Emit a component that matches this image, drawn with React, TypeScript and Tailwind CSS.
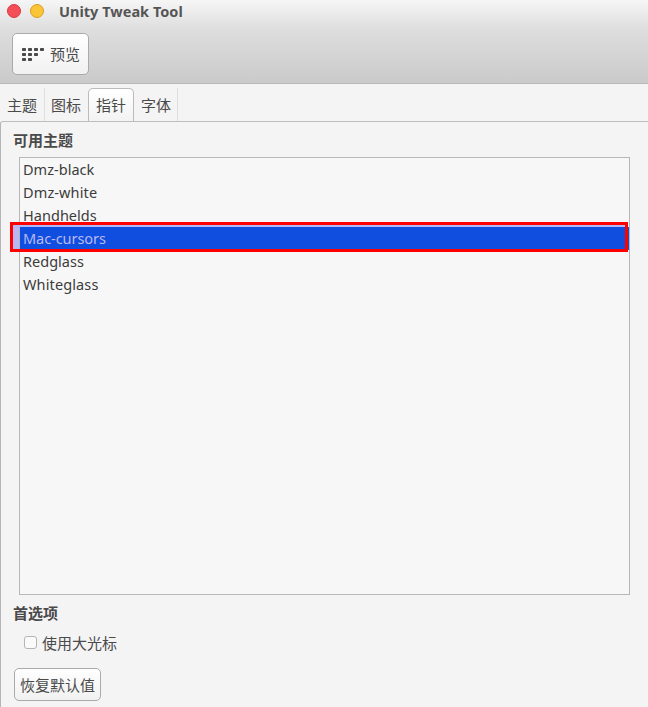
import React from 'react';

const cursors = [
  { name: 'Dmz-black', spacing: 'tracking-[0.02px]' },
  { name: 'Dmz-white', spacing: 'tracking-[0.12px]' },
  { name: 'Handhelds', spacing: 'tracking-[0.03px]' },
  { name: 'Mac-cursors', spacing: 'tracking-[-0.05px]' },
  { name: 'Redglass', spacing: 'tracking-[0.02px]' },
  { name: 'Whiteglass', spacing: 'tracking-[0.12px]' },
];

function PreviewIcon() {
  const rows = [4, 3, 2];
  return (
    <svg width="24" height="14" viewBox="0 0 24 14" className="mt-px block shrink-0" fill="#4a4a4a">
      {rows.map((n, r) =>
        Array.from({ length: n }, (_, c) => (
          <rect key={`${r}-${c}`} x={c * 6} y={r * 5} width="4" height="3" rx="0.7" />
        )),
      )}
    </svg>
  );
}

function Header() {
  return (
    <header className="h-[84px] border-b border-[#b9b9b9] bg-linear-to-b from-[#f6f6f6] via-[#dedede] via-35% to-[#cacaca]">
      <div className="flex h-6 items-center pl-[7px]">
        <span className="mt-[-2px] size-[14px] rounded-full border border-[#dc3644] bg-[#f44f58]" />
        <span className="mt-[-2px] ml-[9px] size-[14px] rounded-full border border-[#d99e20] bg-[#fac536]" />
        <h1 className="mt-[-2px] ml-[15px] text-[14.5px] leading-6 font-bold tracking-[0.02px] whitespace-nowrap text-[#555]">
          Unity Tweak Tool
        </h1>
      </div>
      <button className="mt-[9px] ml-3 flex h-[42px] w-[77px] items-center rounded-[5px] border border-[#aaa] bg-linear-to-b from-white to-[#f1f1f1] pl-[9px] text-[15px]">
        <PreviewIcon />
        <span className="ml-1 whitespace-nowrap">预览</span>
      </button>
    </header>
  );
}

function Tabs() {
  return (
    <nav className="flex h-[37px] items-end text-[15px] leading-[35px]">
      <div className="h-[33px] w-[45px] border-r border-[#dedede] pl-[7px]">主题</div>
      <div className="h-[33px] w-[43px] pl-[6px]">图标</div>
      <div className="h-[33px] w-[46px] rounded-t-[5px] border border-b-0 border-[#bbb] bg-linear-to-b from-white to-[#f3f3f3] pl-[7px] leading-[33px]">指针</div>
      <div className="h-[33px] w-[44px] border-r border-[#dedede] pl-[7px]">字体</div>
    </nav>
  );
}

export default function App() {
  return (
    <div className="h-[707px] w-[648px] overflow-hidden bg-[#f4f4f4] font-['Noto_Sans','Noto_Sans_CJK_SC',sans-serif] text-[#4a4a4a]">
      <Header />
      <Tabs />
      <main className="h-[586px] rounded-tl-[3px] border-t border-l border-t-[#bebebe] border-l-[#b5b5b5] pl-3">
        <h2 className="h-[35px] pt-[6px] text-[15px] leading-6 font-bold">可用主题</h2>
        <div className="relative ml-[6px] h-[438px] w-[611px] border border-[#b7b7b7] bg-[#f7f7f7] text-[14.5px] leading-[23px]">
          {cursors.map(({ name, spacing }) => (
            <div
              key={name}
              className={`h-[23px] pl-[3px] whitespace-nowrap ${spacing} ${name === 'Mac-cursors' ? 'bg-[#104ee0] text-[#b9b8f2]' : 'text-[#3c3c3c]'}`}
            >
              {name}
            </div>
          ))}
          <div className="absolute top-[64px] left-[-10px] h-[30px] w-[618px] border-3 border-[#ff0000]">
            <div className="h-[2px] bg-[#b8b7f5]" />
            <div className="h-[22px] w-[6px] bg-[#b8b7f5]" />
          </div>
        </div>
        <h2 className="mt-[6px] text-[15px] leading-6 font-bold">首选项</h2>
        <label className="mt-[6px] ml-[10px] flex h-6 items-center text-[15px]">
          <span className="mt-[-2px] mr-[5px] ml-px size-[13px] rounded-[3px] border border-[#b5b5b5] bg-[#fafafa]" />
          使用大光标
        </label>
        <button className="mt-[13px] ml-px block h-[33px] w-[87px] rounded-[5px] border border-[#aaa] bg-linear-to-b from-white to-[#f1f1f1] pt-[2px] text-[15px] whitespace-nowrap">
          恢复默认值
        </button>
      </main>
    </div>
  );
}
